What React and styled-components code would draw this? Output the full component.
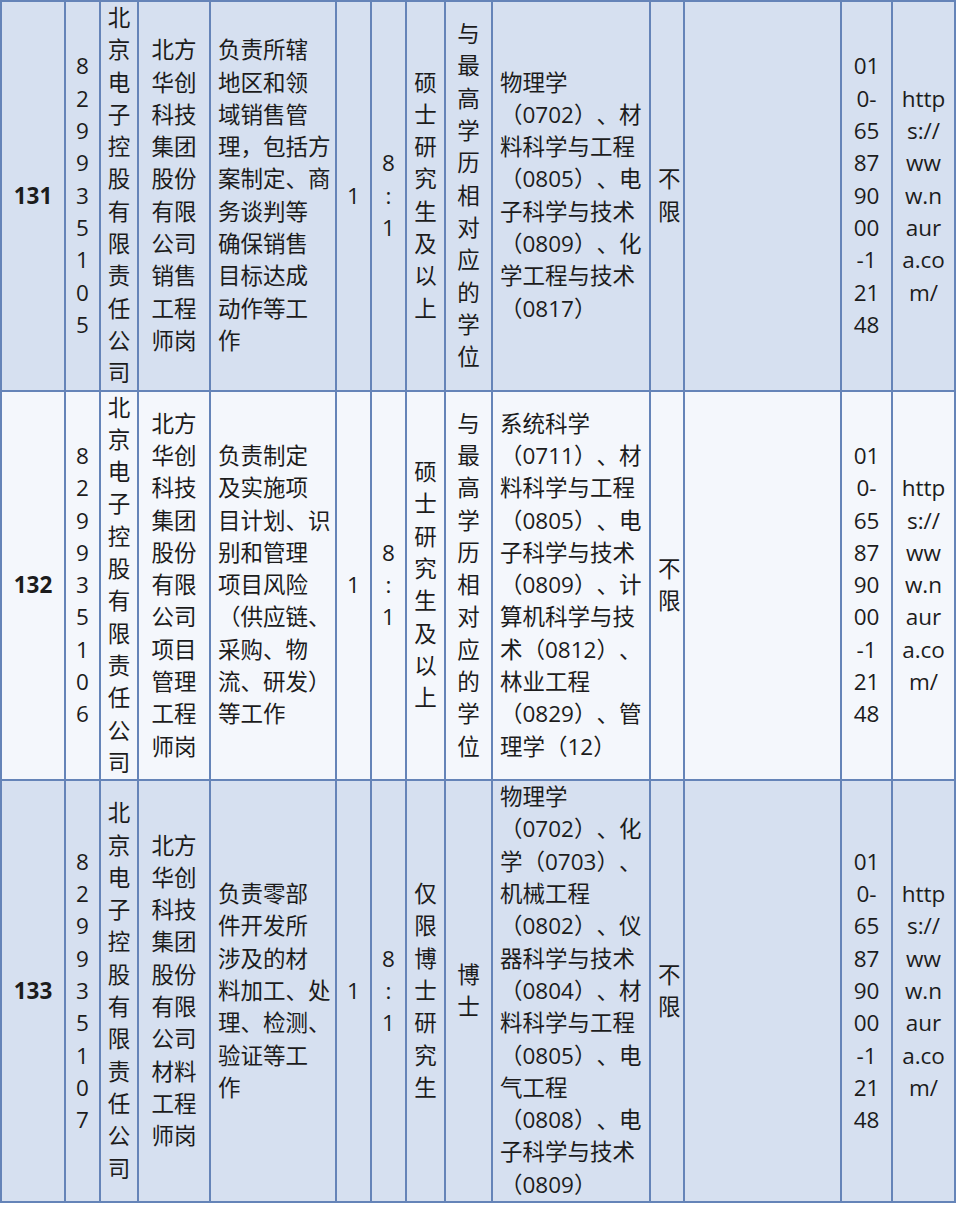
import React from 'react';
import styled, { createGlobalStyle } from 'styled-components';

const LINE = `#6584b8`;
const BLUE = `#d6e0f0`;
const PALE = `#f4f7fc`;

const GlobalStyle = createGlobalStyle`
  body {
    margin: 0;
    background: #ffffff;
    font-family: "Open Sans", "Noto Sans CJK SC", sans-serif;
    color: #1c1c1c;
  }
`;

// column widths, border centre to border centre
const COLS = [64, 35, 38, 72, 126, 35, 35, 39, 47, 158, 34, 157, 51, 63];
// alignment for each column
const ALIGN = ['center', 'center', 'center', 'center', 'left', 'center', 'center', 'center', 'center', 'left', 'left', 'left', 'center', 'center'];

const chars = (s) => s.split('');

const company = chars('北京电子控股有限责任公司');
const ratio = ['8', ':', '1'];
const phone = ['01', '0-', '65', '87', '90', '00', '-1', '21', '48'];
const site = ['http', 's://', 'ww', 'w.n', 'aur', 'a.co', 'm/'];
const degree = chars('与最高学历相对应的学位');

const rows = [
  {
    tint: BLUE,
    cells: [
      ['131'],
      chars('829935105'),
      company,
      ['北方', '华创', '科技', '集团', '股份', '有限', '公司', '销售', '工程', '师岗'],
      ['负责所辖', '地区和领', '域销售管', '理，包括方', '案制定、商', '务谈判等', '确保销售', '目标达成', '动作等工', '作'],
      ['1'],
      ratio,
      chars('硕士研究生及以上'),
      degree,
      ['物理学', '（0702）、材', '料科学与工程', '（0805）、电', '子科学与技术', '（0809）、化', '学工程与技术', '（0817）'],
      ['不', '限'],
      [],
      phone,
      site,
    ],
  },
  {
    tint: PALE,
    cells: [
      ['132'],
      chars('829935106'),
      company,
      ['北方', '华创', '科技', '集团', '股份', '有限', '公司', '项目', '管理', '工程', '师岗'],
      ['负责制定', '及实施项', '目计划、识', '别和管理', '项目风险', '（供应链、', '采购、物', '流、研发）', '等工作'],
      ['1'],
      ratio,
      chars('硕士研究生及以上'),
      degree,
      ['系统科学', '（0711）、材', '料科学与工程', '（0805）、电', '子科学与技术', '（0809）、计', '算机科学与技', '术（0812）、', '林业工程', '（0829）、管', '理学（12）'],
      ['不', '限'],
      [],
      phone,
      site,
    ],
  },
  {
    tint: BLUE,
    cells: [
      ['133'],
      chars('829935107'),
      company,
      ['北方', '华创', '科技', '集团', '股份', '有限', '公司', '材料', '工程', '师岗'],
      ['负责零部', '件开发所', '涉及的材', '料加工、处', '理、检测、', '验证等工', '作'],
      ['1'],
      ratio,
      chars('仅限博士研究生'),
      ['博', '士'],
      ['物理学', '（0702）、化', '学（0703）、', '机械工程', '（0802）、仪', '器科学与技术', '（0804）、材', '料科学与工程', '（0805）、电', '气工程', '（0808）、电', '子科学与技术', '（0809）'],
      ['不', '限'],
      [],
      phone,
      site,
    ],
  },
];

const App = () => {
  return (
    <>
      <GlobalStyle />
      <Sheet>
        <colgroup>
          {COLS.map((w, i) => (
            <Col key={i} $w={w} />
          ))}
        </colgroup>
        <tbody>
          {rows.map((row, r) => (
            <Row key={r} $tint={row.tint}>
              {row.cells.map((lines, c) => (
                <Cell key={c} $align={ALIGN[c]} $bold={c === 0}>
                  {lines.map((t, k) => (
                    <Line key={k}>{t}</Line>
                  ))}
                </Cell>
              ))}
            </Row>
          ))}
        </tbody>
      </Sheet>
    </>
  );
};

export default App;

// Styled-components

const Sheet = styled.table`
  width: 956px;
  table-layout: fixed;
  border-collapse: collapse;
  border: 2px solid ${LINE};
  font-size: 22.5px;
  line-height: 32.3px;
`;

const Col = styled.col`
  width: ${(p) => p.$w}px;
`;

const Row = styled.tr`
  background-color: ${(p) => p.$tint};
`;

const Cell = styled.td`
  border: 2px solid ${LINE};
  padding: ${(p) => (p.$align === 'left' ? '0 0 0 7px' : '0')};
  text-align: ${(p) => p.$align};
  vertical-align: middle;
  font-weight: ${(p) => (p.$bold ? 700 : 400)};
`;

const Line = styled.span`
  display: block;
  white-space: nowrap;
  text-spacing-trim: space-all;
`;
